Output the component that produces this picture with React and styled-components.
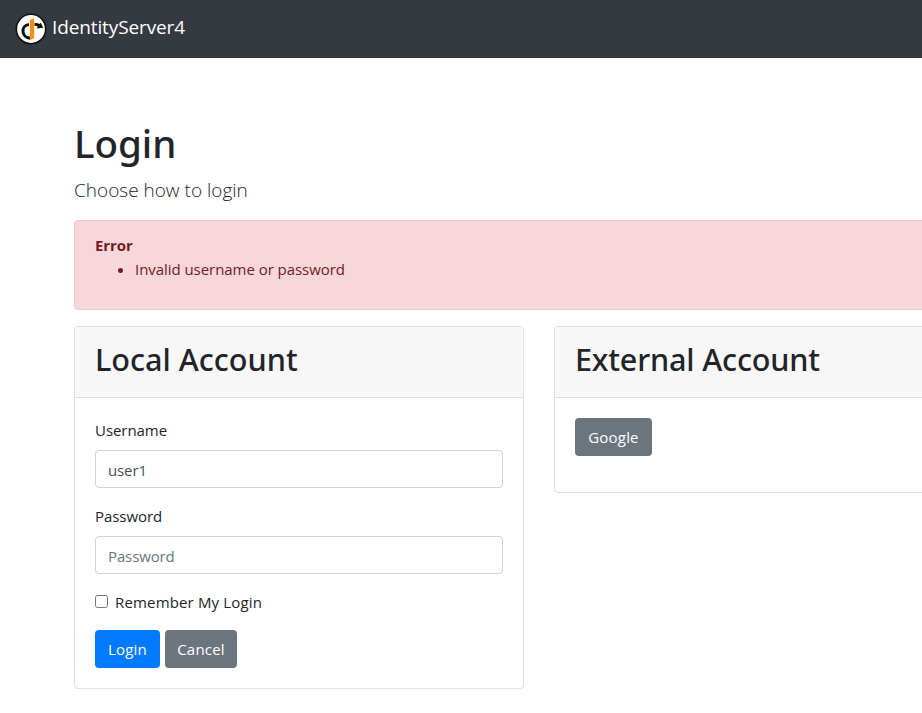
import React from "react";
import styled, { createGlobalStyle } from "styled-components";

const GlobalStyle = createGlobalStyle`
  *, *::before, *::after { box-sizing: border-box; }
  html { overflow: hidden; }
  body {
    margin: 0;
    overflow: hidden;
    background: #fff;
    color: #212529;
    font-family: "Open Sans", "Noto Sans", sans-serif;
    font-size: 15px;
    letter-spacing: -0.05px;
    line-height: 24px;
  }
`;

const Navbar = styled.nav`
  display: flex;
  align-items: center;
  height: 58px;
  padding: 0 16px;
  background: #343a40;
`;

const Brand = styled.a`
  display: flex;
  align-items: center;
  gap: 5px;
  color: #fff;
  font-size: 19px;
  letter-spacing: -0.12px;
  line-height: 30px;
  text-decoration: none;
`;

const BrandName = styled.span`
  margin-top: -4px;
`;

const LogoMark = styled.svg`
  display: block;
  width: 32px;
  height: 32px;
  margin-left: -1px;
`;

const Container = styled.main`
  width: 1140px;
  margin: 60px 0 0 59px;
  padding: 0 15px;
`;

const Title = styled.h1`
  margin: 0 0 8px;
  padding-top: 1px;
  height: 48px;
  font: 500 38.5px/48px "Noto Sans", sans-serif;
`;

const Lead = styled.p`
  height: 30px;
  margin: 0 0 16px;
  padding-top: 1px;
  font-size: 19px;
  font-weight: 300;
  letter-spacing: 0;
  line-height: 30px;
`;

const Alert = styled.div`
  height: 90px;
  margin-bottom: 16px;
  padding: 12px 20px;
  border: 1px solid #f5c6cb;
  border-radius: 4px;
  background: #f8d7da;
  color: #721c24;
`;

const AlertHeading = styled.strong`
  display: block;
  font-weight: 700;
`;

const ErrorList = styled.ul`
  margin: 0;
  padding-left: 40px;
`;

const Columns = styled.div`
  display: grid;
  grid-template-columns: 450px 450px;
  align-items: start;
  gap: 30px;
`;

const Card = styled.section`
  border: 1px solid #dfdfdf;
  border-radius: 4px;
  background: #fff;
`;

const CardHeader = styled.header`
  height: 71px;
  padding: 12px 20px;
  border-bottom: 1px solid #dfdfdf;
  border-radius: 3px 3px 0 0;
  background: #f7f7f7;
`;

const CardTitle = styled.h2`
  margin: 0;
  padding-top: 1px;
  font: 500 30.6px/38px "Noto Sans", sans-serif;
  letter-spacing: ${(p) => p.$tracking || 0}px;
`;

const CardBody = styled.div`
  padding: 20px;
  padding-bottom: ${(p) => p.$bottom || 20}px;
`;

const Field = styled.div`
  margin-bottom: 16px;
`;

const Label = styled.label`
  display: block;
  margin-bottom: 8px;
`;

const TextInput = styled.input`
  display: block;
  width: 100%;
  height: 38px;
  padding: 8px 12px 6px;
  border: 1px solid #ced4da;
  border-radius: 4px;
  background: #fff;
  color: #495057;
  font: inherit;
  letter-spacing: -0.12px;
  outline: none;
  &::placeholder { color: #6c757d; opacity: 1; }
`;

const CheckLabel = styled.label`
  display: flex;
  align-items: center;
  gap: 7px;
  height: 24px;
  margin-bottom: 16px;
  letter-spacing: 0.16px;
`;

const Checkbox = styled.input`
  width: 13px;
  height: 13px;
  margin: 0 0 2px;
`;

const Buttons = styled.div`
  display: flex;
  gap: 5px;
`;

const Button = styled.button`
  width: ${(p) => p.$width}px;
  height: 38px;
  padding: 0;
  border: 0;
  border-radius: 4px;
  background: ${(p) => (p.$primary ? "#007bff" : "#6c757d")};
  color: #fff;
  font: inherit;
  letter-spacing: 0.2px;
`;

function Logo() {
  return (
    <LogoMark viewBox="0 0 32 32" aria-hidden="true">
      <circle cx="16" cy="16" r="14.7" fill="#fff" stroke="#111" strokeWidth="1.6" />
      <path d="M14 11.6C9.7 12 7.7 15.2 8 18.6C8.3 22.3 11.2 25 15.4 25.2" fill="none" stroke="#111" strokeWidth="3" />
      <path d="M19.5 10C21.6 9.8 23.2 10.2 24.4 11L25.8 9.8L28.2 14.7L21.6 15.6L22.8 13.6C21.7 12.8 20.6 12.7 19.5 12.9Z" fill="#111" />
      <path d="M15 6.8L19.2 5.2V25.2L15 26.8Z" fill="#ff8c0a" />
    </LogoMark>
  );
}

export default function App() {
  return (
    <>
      <GlobalStyle />
      <Navbar>
        <Brand>
          <Logo />
          <BrandName>IdentityServer4</BrandName>
        </Brand>
      </Navbar>
      <Container>
        <Title>Login</Title>
        <Lead>Choose how to login</Lead>
        <Alert>
          <AlertHeading>Error</AlertHeading>
          <ErrorList>
            <li>Invalid username or password</li>
          </ErrorList>
        </Alert>
        <Columns>
          <Card>
            <CardHeader>
              <CardTitle>Local Account</CardTitle>
            </CardHeader>
            <CardBody>
              <Field>
                <Label htmlFor="username">Username</Label>
                <TextInput id="username" defaultValue="user1" spellCheck={false} />
              </Field>
              <Field>
                <Label htmlFor="password">Password</Label>
                <TextInput id="password" type="password" placeholder="Password" />
              </Field>
              <CheckLabel>
                <Checkbox type="checkbox" />
                Remember My Login
              </CheckLabel>
              <Buttons>
                <Button $primary $width={65}>Login</Button>
                <Button $width={72}>Cancel</Button>
              </Buttons>
            </CardBody>
          </Card>
          <Card>
            <CardHeader>
              <CardTitle $tracking={-0.17}>External Account</CardTitle>
            </CardHeader>
            <CardBody $bottom={36}>
              <Button $width={77}>Google</Button>
            </CardBody>
          </Card>
        </Columns>
      </Container>
    </>
  );
}
